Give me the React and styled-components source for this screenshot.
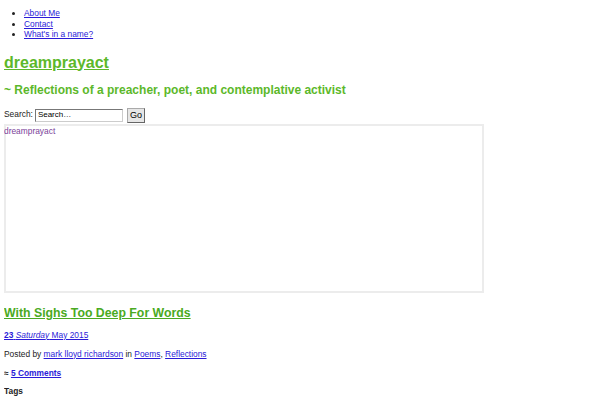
import React from 'react'
import styled, { createGlobalStyle } from 'styled-components'

const Global = createGlobalStyle`
  body {
    margin: 4px;
    font-family: "Liberation Sans", Arial, sans-serif;
    font-size: 8.4px;
    line-height: 1.15;
    color: #222;
    background: #fff;
  }
  a { color: #1a0dab; }
`

const Menu = styled.ul`
  margin: 4px 0 0;
  padding-left: 20px;
  li { line-height: 10.5px; }
  a { color: #2a1ad8; }
`

const SiteTitle = styled.h1`
  margin: 12px 0 0;
  font-size: 16px;
  line-height: 22px;
  a { color: #5cb82a; }
`

const Tagline = styled.h2`
  margin: 8px 0 0;
  font-size: 12px;
  line-height: 16px;
  color: #5cb82a;
`

const SearchForm = styled.form`
  display: flex;
  align-items: center;
  margin-top: 10px;
  height: 15px;
  gap: 2px;
`

const SearchInput = styled.input`
  width: 82px;
  height: 9px;
  font: inherit;
  font-size: 8px;
  padding: 1px 2px;
  border: 1px solid #777;
  border-right-color: #ccc;
  border-bottom-color: #ccc;
`

const GoButton = styled.button`
  margin-left: 2px;
  height: 15px;
  font: inherit;
  font-size: 9px;
  padding: 0 2px;
  background: #e6e6e6;
  border: 1px solid #aaa;
  border-right-color: #666;
  border-bottom-color: #666;
`

const Header = styled.div`
  width: 476px;
  height: 165px;
  margin-top: 1px;
  border: 2px solid #ececec;
  color: #7b3f9a;
  span { display: block; line-height: 10px; margin-left: -2px; }
`

const PostTitle = styled.h2`
  margin: 12px 0 0;
  font-size: 12.3px;
  line-height: 17px;
  a { color: #4aaa22; }
`

const Meta = styled.p`
  margin: ${p => p.$top}px 0 0;
  line-height: 10px;
  font-weight: ${p => (p.$bold ? 'bold' : 'normal')};
  a { color: #2a1ad8; }
`

export default function App() {
  return (
    <>
      <Global />
      <Menu>
        <li><a href="#">About Me</a></li>
        <li><a href="#">Contact</a></li>
        <li><a href="#">What's in a name?</a></li>
      </Menu>
      <SiteTitle><a href="#">dreamprayact</a></SiteTitle>
      <Tagline>~ Reflections of a preacher, poet, and contemplative activist</Tagline>
      <SearchForm>
        <label>Search:</label>
        <SearchInput placeholder="Search…" defaultValue="Search…" />
        <GoButton type="button">Go</GoButton>
      </SearchForm>
      <Header><span>dreamprayact</span></Header>
      <PostTitle><a href="#">With Sighs Too Deep For Words</a></PostTitle>
      <Meta $top={8}>
        <a href="#"><b>23</b> <i>Saturday</i> May 2015</a>
      </Meta>
      <Meta $top={9}>
        Posted by <a href="#">mark lloyd richardson</a> in <a href="#">Poems</a>, <a href="#">Reflections</a>
      </Meta>
      <Meta $top={9} $bold>
        ≈ <a href="#">5 Comments</a>
      </Meta>
      <Meta $top={8} $bold>Tags</Meta>
    </>
  )
}
